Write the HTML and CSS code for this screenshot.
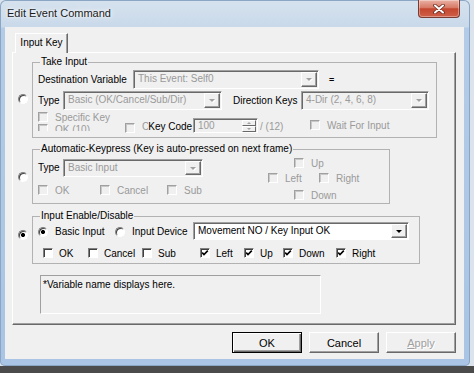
FILE: index.html
```html
<!DOCTYPE html>
<html lang="en">
<head>
    <meta charset="UTF-8">
    <meta name="viewport" content="width=device-width, initial-scale=1.0">
    <title>Edit Event Command</title>
    <link rel="stylesheet" href="styles.css">
</head>
<body>
    <div class="window">
        <div class="titlebar">
            <span class="title">Edit Event Command</span>
            <div class="close-btn">
                <svg width="12" height="10" viewBox="0 0 12 10">
                    <path d="M2 1.5 L10 8.5 M10 1.5 L2 8.5" stroke="#6b2a20" stroke-width="3.6" stroke-linecap="round"/>
                    <path d="M2 1.5 L10 8.5 M10 1.5 L2 8.5" stroke="#fff" stroke-width="2" stroke-linecap="round"/>
                </svg>
            </div>
        </div>

        <div class="client">
            <div class="tabctl">
                <div class="tab">Input Key</div>
                <div class="panel">

                    <!-- Take Input -->
                    <div class="option opt-take">
                        <span class="radio"></span>
                        <fieldset class="group group-take">
                            <legend>Take Input</legend>
                            <div class="row row-a">
                                <span class="lbl w-dest">Destination Variable</span>
                                <div class="combo w-var"><span>This Event: Self0</span><i class="arrow"></i></div>
                                <span class="eq">=</span>
                            </div>
                            <div class="row row-b">
                                <span class="lbl w-type">Type</span>
                                <div class="combo w-kind"><span>Basic (OK/Cancel/Sub/Dir)</span><i class="arrow"></i></div>
                                <span class="lbl w-dir">Direction Keys</span>
                                <div class="combo w-dirs"><span>4-Dir (2, 4, 6, 8)</span><i class="arrow"></i></div>
                            </div>
                            <div class="row row-c">
                                <div class="stack">
                                    <div class="check off"><span class="box"></span><span>Specific Key</span></div>
                                    <div class="clip">
                                        <div class="check off"><span class="box"></span><span>OK (10)</span></div>
                                    </div>
                                </div>
                                <span class="box key-box"></span>
                                <span class="keycode"><span class="ghost">C</span><span class="kc-text">Key Code</span></span>
                                <div class="spin">
                                    <span class="spin-val">100</span>
                                    <span class="spin-btns"><i class="up"></i><i class="down"></i></span>
                                </div>
                                <span class="ghost slash">/ (12)</span>
                                <div class="check off wait"><span class="box"></span><span>Wait For Input</span></div>
                            </div>
                        </fieldset>
                    </div>

                    <!-- Automatic keypress -->
                    <div class="option opt-auto">
                        <span class="radio"></span>
                        <fieldset class="group group-auto">
                            <legend>Automatic-Keypress (Key is auto-pressed on next frame)</legend>
                            <div class="auto-body">
                                <div class="auto-left">
                                    <div class="row auto-type">
                                        <span class="lbl w-type">Type</span>
                                        <div class="combo short w-basic"><span>Basic Input</span><i class="arrow"></i></div>
                                    </div>
                                    <div class="row auto-keys">
                                        <div class="check off w-ok"><span class="box"></span><span>OK</span></div>
                                        <div class="check off w-cancel"><span class="box"></span><span>Cancel</span></div>
                                        <div class="check off"><span class="box"></span><span>Sub</span></div>
                                    </div>
                                </div>
                                <div class="dpad">
                                    <div class="check off dp-up"><span class="box"></span><span>Up</span></div>
                                    <div class="dp-mid">
                                        <div class="check off dp-left"><span class="box"></span><span>Left</span></div>
                                        <div class="check off"><span class="box"></span><span>Right</span></div>
                                    </div>
                                    <div class="check off dp-down"><span class="box"></span><span>Down</span></div>
                                </div>
                            </div>
                        </fieldset>
                    </div>

                    <!-- Input enable / disable -->
                    <div class="option opt-enable">
                        <span class="radio on"></span>
                        <fieldset class="group group-enable">
                            <legend>Input Enable/Disable</legend>
                            <div class="row en-top">
                                <div class="choice w-basic-in"><span class="radio on"></span><span>Basic Input</span></div>
                                <div class="choice w-device"><span class="radio"></span><span>Input Device</span></div>
                                <div class="combo live w-move"><span>Movement NO / Key Input OK</span><i class="arrow"></i></div>
                            </div>
                            <div class="row en-keys">
                                <div class="check e-ok"><span class="box"></span><span>OK</span></div>
                                <div class="check e-cancel"><span class="box"></span><span>Cancel</span></div>
                                <div class="check e-sub"><span class="box"></span><span>Sub</span></div>
                                <div class="check e-left"><span class="box ticked"></span><span>Left</span></div>
                                <div class="check e-up"><span class="box ticked"></span><span>Up</span></div>
                                <div class="check e-down"><span class="box ticked"></span><span>Down</span></div>
                                <div class="check"><span class="box ticked"></span><span>Right</span></div>
                            </div>
                        </fieldset>
                    </div>

                    <div class="note">*Variable name displays here.</div>
                </div>
            </div>

            <div class="buttons">
                <button class="btn default">OK</button>
                <button class="btn">Cancel</button>
                <button class="btn disabled"><u>A</u>pply</button>
            </div>
        </div>
    </div>
</body>
</html>
```

FILE: styles.css
```css
:root {
    --face: #f0f0f0;
    --shadow: #a0a0a0;
    --dark: #696969;
    --grey-text: #9a9a9a;
    --frame: #b3cbe6;
}

* {
    margin: 0;
    padding: 0;
    box-sizing: border-box;
}

body {
    width: 474px;
    height: 373px;
    overflow: hidden;
    background: linear-gradient(#dbe3ec 0, #dbe3ec 366px, #4b4b4b 366px);
    font-family: "Liberation Sans", Arial, sans-serif;
    font-size: 10px;
    color: #000;
}

/* window frame */
.window {
    width: 470px;
    height: 366px;
    background: linear-gradient(#d6e2ee 0, #c9d9ea 27px, var(--frame) 28px, #a9c4e4);
    border-radius: 6px 6px 5px 5px;
    box-shadow: inset 0 0 0 1px #8aa6c4;
}

.titlebar {
    height: 27px;
    display: flex;
    justify-content: space-between;
    align-items: flex-start;
}

.title {
    padding: 6px 0 0 7px;
    font-size: 11px;
    line-height: 14px;
    color: #1a1a1a;
    text-shadow: 0 0 6px #fff, 0 0 3px #fff;
}

.close-btn {
    width: 42px;
    height: 18px;
    margin-right: 10px;
    border: 1px solid #7c3b31;
    border-top: none;
    border-radius: 0 0 4px 4px;
    background: linear-gradient(#eab1a4, #d77a66 45%, #c4462f 52%, #cf6048);
    box-shadow: inset 0 0 0 1px rgba(255, 255, 255, 0.35);
    display: flex;
    align-items: center;
    justify-content: center;
}

.client {
    margin-left: 5px;
    width: 459px;
    height: 332px;
    background: var(--face);
}

/* tab control */
.tabctl {
    margin-left: 7px;
    padding-top: 6px;
    width: 444px;
}

.tab {
    position: relative;
    z-index: 1;
    margin-left: 3px;
    margin-bottom: -1px;
    width: 53px;
    height: 20px;
    background: var(--face);
    border: 1px solid #fff;
    border-right: 1px solid var(--dark);
    border-bottom: none;
    box-shadow: inset -1px 0 0 var(--shadow);
    line-height: 18px;
    text-align: center;
}

.panel {
    height: 273px;
    border: 1px solid;
    border-color: #fff var(--dark) var(--dark) #fff;
    box-shadow: inset -1px -1px 0 var(--shadow);
    padding-top: 3px;
}

.option {
    display: flex;
    align-items: flex-start;
}

.option > .radio {
    margin-left: 5px;
    margin-right: 4px;
}

.opt-take > .radio { margin-top: 38px; }
.opt-auto { margin-top: 5px; }
.opt-auto > .radio { margin-top: 29px; }
.opt-enable { margin-top: 6px; }
.opt-enable > .radio { margin-top: 20px; }

/* group boxes */
.group {
    border: 1px solid #b2b2b2;
    padding: 0 0 0 5px;
}

.group legend {
    margin-left: 2px;
    padding: 0 1px;
    line-height: 12px;
}

.group-take { width: 405px; height: 82px; }
.group-auto { width: 358px; height: 61px; }
.group-enable { width: 388px; height: 54px; }

.row {
    display: flex;
    align-items: center;
}

.lbl {
    white-space: nowrap;
    line-height: 12px;
}

.w-dest { width: 95px; }
.w-type { width: 25px; }
.w-dir { width: 68px; margin-left: 11px; }
.w-var { width: 186px; }
.w-kind { width: 159px; }
.w-dirs { width: 128px; }
.w-basic { width: 140px; }
.w-move { width: 216px; }

.row-a { margin-top: 2px; }
.row-b { margin-top: 2px; }

.eq {
    margin-left: 10px;
    font-weight: bold;
    font-size: 9px;
}

/* combo boxes */
.combo {
    display: flex;
    align-items: stretch;
    height: 19px;
    border: 1px solid;
    border-color: var(--shadow) #fff #fff var(--shadow);
    box-shadow: inset 1px 1px 0 var(--dark);
    background: var(--face);
    color: var(--grey-text);
}

.combo.short { height: 18px; }

.combo span {
    flex: 1;
    padding: 0 0 0 4px;
    line-height: 16px;
    white-space: nowrap;
    overflow: hidden;
}

.combo .arrow {
    width: 16px;
    margin: 1px 1px 1px 0;
    background: var(--face);
    border: 1px solid;
    border-color: #fff var(--dark) var(--dark) #fff;
    box-shadow: inset -1px -1px 0 var(--shadow);
    display: flex;
    align-items: center;
    justify-content: center;
}

.combo .arrow::before {
    content: "";
    border-left: 3px solid transparent;
    border-right: 3px solid transparent;
    border-top: 3px solid var(--shadow);
    filter: drop-shadow(1px 1px 0 #fff);
}

.combo.live {
    height: 18px;
    background: #fff;
    color: #000;
    border-color: var(--shadow) #fff #fff var(--shadow);
}

.combo.live span { line-height: 15px; }

.combo.live .arrow::before {
    border-top-color: #000;
    filter: none;
}

/* check boxes & radios */
.check {
    display: flex;
    align-items: center;
    height: 12px;
    white-space: nowrap;
}

.check .box { margin-right: 7px; }

.box {
    display: inline-block;
    flex: none;
    width: 10px;
    height: 10px;
    background: #fff;
    border: 1px solid;
    border-color: #808080 #fff #fff #808080;
    box-shadow: inset 1px 1px 0 #404040;
}

.box.ticked {
    background: #fff url("data:image/svg+xml,%3Csvg xmlns='http://www.w3.org/2000/svg' width='8' height='8' viewBox='0 0 8 8'%3E%3Cpath d='M1.2 3.6 L3 5.6 L6.8 1.6' stroke='%23000' stroke-width='1.6' fill='none'/%3E%3C/svg%3E") center / 8px 8px no-repeat;
}

.check.off { color: var(--grey-text); }

.check.off .box,
.key-box {
    background: var(--face);
    border-color: var(--shadow) #fff #fff var(--shadow);
    box-shadow: inset 1px 1px 0 #c8c8c8;
}

.radio {
    display: inline-block;
    flex: none;
    width: 10px;
    height: 10px;
    border-radius: 50%;
    background: #fff;
    border: 1px solid;
    border-color: #808080 #fff #fff #808080;
    box-shadow: inset 1px 1px 0 #404040;
}

.radio.on {
    background: radial-gradient(circle, #000 0 1.8px, #fff 2.3px);
}

/* take input, third row */
.row-c {
    align-items: flex-start;
    height: 23px;
}

.stack {
    width: 87px;
    margin-top: 1px;
}

.clip {
    height: 8px;
    overflow: hidden;
}

.key-box { margin-top: 13px; }

.keycode {
    display: flex;
    width: 58px;
    padding-left: 7px;
    margin-top: 11px;
    line-height: 12px;
    white-space: nowrap;
}

.ghost {
    color: var(--grey-text);
    line-height: 12px;
}

.kc-text {
    margin-left: -1px;
    background: var(--face);
}

.spin {
    display: flex;
    width: 65px;
    height: 15px;
    margin-top: 8px;
    border: 1px solid;
    border-color: var(--shadow) #fff #fff var(--shadow);
    box-shadow: inset 1px 1px 0 var(--dark);
    background: var(--face);
    color: var(--grey-text);
}

.spin-val {
    flex: 1;
    padding-left: 4px;
    line-height: 13px;
}

.spin-btns {
    width: 15px;
    display: flex;
    flex-direction: column;
    padding: 1px 1px 0 0;
}

.spin-btns i {
    flex: 1;
    border: 1px solid;
    border-color: #fff var(--dark) var(--dark) #fff;
    display: flex;
    align-items: center;
    justify-content: center;
}

.spin-btns .up::before {
    content: "";
    border-left: 2px solid transparent;
    border-right: 2px solid transparent;
    border-bottom: 2px solid var(--shadow);
}

.spin-btns .down::before {
    content: "";
    border-left: 2px solid transparent;
    border-right: 2px solid transparent;
    border-top: 2px solid var(--shadow);
}

.slash {
    width: 50px;
    margin: 11px 0 0 2px;
}

.wait { margin-top: 9px; }

/* automatic keypress */
.auto-body {
    display: flex;
    align-items: flex-start;
}

.auto-left { width: 165px; }

.auto-type { margin-top: 4px; }

.auto-keys { margin-top: 7px; }

.w-ok { width: 62px; }
.w-cancel { width: 67px; }

.dpad { margin-left: 65px; }

.dp-up { margin: 2px 0 0 26px; }

.dp-mid {
    display: flex;
    margin-top: 3px;
}

.dp-left { width: 51px; }

.dp-down { margin: 5px 0 0 26px; }

/* input enable */
.en-top { height: 18px; }

.choice {
    display: flex;
    align-items: center;
    white-space: nowrap;
}

.choice .radio { margin-right: 7px; }

.w-basic-in { width: 77px; }
.w-device { width: 78px; }

.choice .radio { margin-top: 1px; }

.en-keys {
    margin-top: 7px;
    padding-left: 5px;
}

.e-ok { width: 45px; }
.e-cancel { width: 54px; }
.e-sub { width: 58px; }
.e-left { width: 44px; }
.e-up { width: 39px; }
.e-down { width: 53px; }

.en-keys .check .box { margin-right: 6px; }

.note {
    margin: 11px 0 0 27px;
    width: 281px;
    height: 39px;
    border: 1px solid;
    border-color: var(--shadow) #fff #fff var(--shadow);
    padding: 3px 2px;
    line-height: 12px;
}

/* dialog buttons */
.buttons {
    display: flex;
    justify-content: flex-end;
    gap: 7px;
    margin-top: 7px;
    padding-right: 8px;
}

.btn {
    width: 70px;
    height: 21px;
    background: var(--face);
    border: 1px solid;
    border-color: #fff var(--dark) var(--dark) #fff;
    box-shadow: inset -1px -1px 0 var(--shadow);
    font-family: "Liberation Sans", Arial, sans-serif;
    font-size: 11px;
    color: #000;
}

.btn.default {
    border-color: #000;
    box-shadow: inset 1px 1px 0 #fff, inset -1px -1px 0 var(--dark), inset -2px -2px 0 var(--shadow);
}

.btn.disabled {
    color: var(--shadow);
    text-shadow: 1px 1px 0 #fff;
}
```
